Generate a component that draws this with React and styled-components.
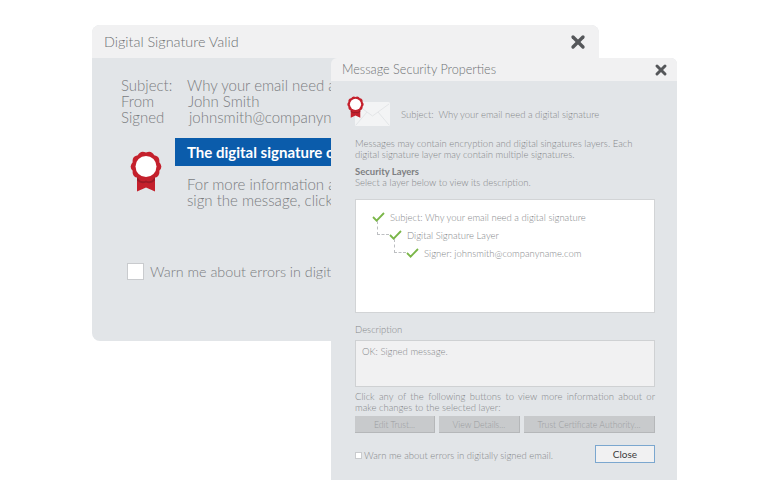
import React from "react";
import styled, { createGlobalStyle } from "styled-components";
import { X } from "lucide-react";

const GlobalStyle = createGlobalStyle`
  html, body {
    margin: 0;
    padding: 0;
    background: #fff;
    font-family: "Lato", "Open Sans", sans-serif;
  }
`;

const Desktop = styled.div`
  position: relative;
  width: 768px;
  height: 503px;
  overflow: hidden;
  background: #fff;
`;

const Window = styled.section`
  position: absolute;
  left: ${(p) => p.$left}px;
  top: ${(p) => p.$top}px;
  width: ${(p) => p.$width}px;
  height: ${(p) => p.$height}px;
  border-radius: ${(p) => p.$radius};
  background: #e2e5e8;
  overflow: hidden;
  display: flex;
  flex-direction: column;
`;

const TitleBar = styled.header`
  flex: none;
  height: ${(p) => p.$height}px;
  padding: 0 ${(p) => p.$padRight}px 0 ${(p) => p.$padLeft}px;
  background: #f1f1f2;
  display: flex;
  align-items: center;
  justify-content: space-between;
`;

const Title = styled.h1`
  margin: 0;
  font-size: ${(p) => p.$size}px;
  font-weight: 300;
  color: #6f7174;
  white-space: nowrap;
`;

const CloseIcon = styled(X)`
  color: #55575a;
  display: block;
`;

/* back window */

const BackBody = styled.div`
  padding: 19px 0 0 29px;
  font-size: 15px;
  font-weight: 300;
  color: #7a7c7f;
  white-space: nowrap;
`;

const Fields = styled.dl`
  margin: 0;
  display: grid;
  grid-template-columns: 66px auto;
  justify-content: start;
  line-height: 16px;
`;

const FieldName = styled.dt`
  margin: 0;
`;

const FieldValue = styled.dd`
  margin: 0;
  padding-left: ${(p) => p.$nudge || 0}px;
`;

const ResultRow = styled.div`
  margin-top: 13px;
  display: flex;
  gap: 14px;
`;

const BadgeSlot = styled.div`
  flex: none;
  width: 40px;
  padding: 13px 0 0 9px;
  box-sizing: border-box;
`;

const Banner = styled.div`
  width: 400px;
  height: 28px;
  padding-left: 12px;
  display: flex;
  align-items: center;
  background: #0b5cab;
  color: #fff;
  font-size: 15px;
  font-weight: 700;
`;

const ResultText = styled.p`
  margin: 10px 0 0 12px;
  line-height: 16px;
`;

const BackCheck = styled.label`
  margin: 55px 0 0 6px;
  display: flex;
  align-items: center;
  gap: 6px;
  font-size: 14.3px;
`;

const Box = styled.span`
  flex: none;
  box-sizing: border-box;
  width: ${(p) => p.$size}px;
  height: ${(p) => p.$size}px;
  background: #fff;
  border: 1px solid #c9cbce;
`;

/* front window */

const FrontBody = styled.div`
  padding: 14px 22px 0 24px;
  font-size: 9.5px;
  font-weight: 300;
  color: #85878a;
`;

const MessageHead = styled.div`
  height: 31px;
  display: flex;
  align-items: flex-end;
  margin-left: -8px;
`;

const EnvelopeArt = styled.svg`
  flex: none;
  display: block;
  width: 43px;
  height: 30px;
`;

const MessageSubject = styled.span`
  margin: 0 0 6px 11px;
  white-space: pre;
`;

const Para = styled.p`
  margin: ${(p) => p.$top || 0}px 0 0;
  line-height: 11px;
  white-space: nowrap;
  text-align-last: ${(p) => (p.$justify ? "justify" : "left")};
`;

const SectionTitle = styled.h2`
  margin: 6px 0 0;
  font-size: 9.5px;
  font-weight: 700;
  line-height: 11px;
  color: #7d7f82;
`;

const TreeBox = styled.div`
  box-sizing: border-box;
  height: 114px;
  margin-top: 11px;
  padding: 8px 0 0 16px;
  background: #fff;
  border: 1px solid #d2d4d6;
`;

const TreeRow = styled.div`
  position: relative;
  height: 18px;
  margin-left: ${(p) => p.$level * 17}px;
  display: flex;
  align-items: center;
  gap: 5px;
  white-space: pre;
`;

const Connector = styled.span`
  position: absolute;
  left: -12px;
  top: -5px;
  width: 11px;
  height: 13px;
  border-left: 1px dashed #bdbfc2;
  border-bottom: 1px dashed #bdbfc2;
`;

const Tick = styled.svg`
  flex: none;
  display: block;
  width: 13px;
  height: 10px;
`;

const DescLabel = styled.div`
  margin-top: 11px;
  line-height: 11px;
`;

const DescBox = styled.div`
  box-sizing: border-box;
  height: 47px;
  margin-top: 5px;
  padding: 5px 6px;
  background: #f1f1f2;
  border: 1px solid #cfd1d3;
`;

const ButtonRow = styled.div`
  margin-top: 3px;
  display: grid;
  grid-template-columns: 80px 81px 131px;
  justify-content: space-between;
`;

const GreyButton = styled.button`
  height: 17px;
  padding: 0;
  font-family: inherit;
  font-size: 8.7px;
  font-weight: 300;
  color: #9a9c9f;
  background: #c8cacc;
  border: 0;
  border-bottom: 1px solid #b5b7b9;
  border-right: 1px solid #b5b7b9;
`;

const FootRow = styled.div`
  margin-top: 12px;
  display: flex;
  align-items: center;
  justify-content: space-between;
`;

const FootCheck = styled.label`
  margin-top: 3px;
  display: flex;
  align-items: center;
  gap: 2px;
`;

const CloseButton = styled.button`
  box-sizing: border-box;
  width: 60px;
  height: 18px;
  padding: 0;
  font-family: inherit;
  font-size: 10px;
  font-weight: 400;
  color: #3c3c3c;
  background: #f1f1f2;
  border: 1px solid #7ba7cf;
`;

const scallopPath = (cx, cy, inner, outer, lobes) => {
  const pt = (r, a) =>
    `${(cx + r * Math.cos(a)).toFixed(2)} ${(cy + r * Math.sin(a)).toFixed(2)}`;
  const step = (Math.PI * 2) / lobes;
  let d = `M${pt(inner, -Math.PI / 2)}`;
  for (let i = 0; i < lobes; i++) {
    const a = -Math.PI / 2 + i * step;
    d += ` Q${pt(outer * 1.12, a + step / 2)} ${pt(inner, a + step)}`;
  }
  return d + "Z";
};

const Badge = ({ width, height }) => (
  <svg width={width} height={height} viewBox="0 0 32 41" style={{ display: "block" }}>
    <path d="M7 24H25V40.5L16 36.5L7 40.5Z" fill="#c4202c" />
    <path d="M7 26H25V29.5Q21 33.5 16 31.5Q11 33.5 7 29.5Z" fill="#9c1a26" />
    <path d={scallopPath(16, 15.5, 14, 15.6, 10)} fill="#c4202c" />
    <circle cx="16" cy="15.5" r="10.5" fill="#fff" />
  </svg>
);

const Check = () => (
  <Tick viewBox="0 0 13 10">
    <path d="M1 5L4.6 8.6L12 1" fill="none" stroke="#7ab648" strokeWidth="1.8" />
  </Tick>
);

const Envelope = () => (
  <EnvelopeArt viewBox="0 0 43 30">
    <rect x="8" y="6" width="35" height="24" rx="1.5" fill="#f3f4f5" />
    <path d="M9 8L25.5 20L42 8M9 29L20 16M42 29L31 16" fill="none" stroke="#e3e5e7" strokeWidth="1" />
    <foreignObject x="0" y="0" width="17" height="22">
      <Badge width={17} height={22} />
    </foreignObject>
  </EnvelopeArt>
);

export default function App() {
  return (
    <Desktop>
      <GlobalStyle />
      <Window $left={92} $top={25} $width={507} $height={316} $radius="8px">
        <TitleBar $height={33} $padLeft={12} $padRight={11}>
          <Title $size={14.4}>Digital Signature Valid</Title>
          <CloseIcon size={20} strokeWidth={4} />
        </TitleBar>
        <BackBody>
          <Fields>
            <FieldName>Subject:</FieldName>
            <FieldValue>Why your email need a digital signature</FieldValue>
            <FieldName>From</FieldName>
            <FieldValue $nudge={1}>John Smith</FieldValue>
            <FieldName>Signed</FieldName>
            <FieldValue $nudge={2}>johnsmith@companyname.com</FieldValue>
          </Fields>
          <ResultRow>
            <BadgeSlot>
              <Badge width={32} height={41} />
            </BadgeSlot>
            <div>
              <Banner>The digital signature on this message is valid</Banner>
              <ResultText>
                For more information about the certificate used to
                <br />
                sign the message, click Details.
              </ResultText>
            </div>
          </ResultRow>
          <BackCheck>
            <Box $size={17} />
            Warn me about errors in digitally signed email.
          </BackCheck>
        </BackBody>
      </Window>

      <Window $left={331} $top={58} $width={346} $height={422} $radius="6px 6px 0 0">
        <TitleBar $height={23} $padLeft={11} $padRight={8}>
          <Title $size={12.65}>Message Security Properties</Title>
          <CloseIcon size={16} strokeWidth={4.5} />
        </TitleBar>
        <FrontBody>
          <MessageHead>
            <Envelope />
            <MessageSubject>Subject:  Why your email need a digital signature</MessageSubject>
          </MessageHead>
          <Para $top={12}>Messages may contain encryption and digital singatures layers. Each</Para>
          <Para>digital signature layer may contain multiple signatures.</Para>
          <SectionTitle>Security Layers</SectionTitle>
          <Para>Select a layer below to view its description.</Para>
          <TreeBox>
            <TreeRow $level={0}>
              <Check />
              Subject: Why your email need a digital signature
            </TreeRow>
            <TreeRow $level={1}>
              <Connector />
              <Check />
              Digital Signature Layer
            </TreeRow>
            <TreeRow $level={2}>
              <Connector />
              <Check />
              Signer: johnsmith@companyname.com
            </TreeRow>
          </TreeBox>
          <DescLabel>Description</DescLabel>
          <DescBox>OK: Signed message.</DescBox>
          <Para $top={4} $justify>
            Click any of the following buttons to view more information about or
          </Para>
          <Para>make changes to the selected layer:</Para>
          <ButtonRow>
            <GreyButton>Edit Trust...</GreyButton>
            <GreyButton>View Details...</GreyButton>
            <GreyButton>Trust Certificate Authority...</GreyButton>
          </ButtonRow>
          <FootRow>
            <FootCheck>
              <Box $size={7} />
              Warn me about errors in digitally signed email.
            </FootCheck>
            <CloseButton>Close</CloseButton>
          </FootRow>
        </FrontBody>
      </Window>
    </Desktop>
  );
}
